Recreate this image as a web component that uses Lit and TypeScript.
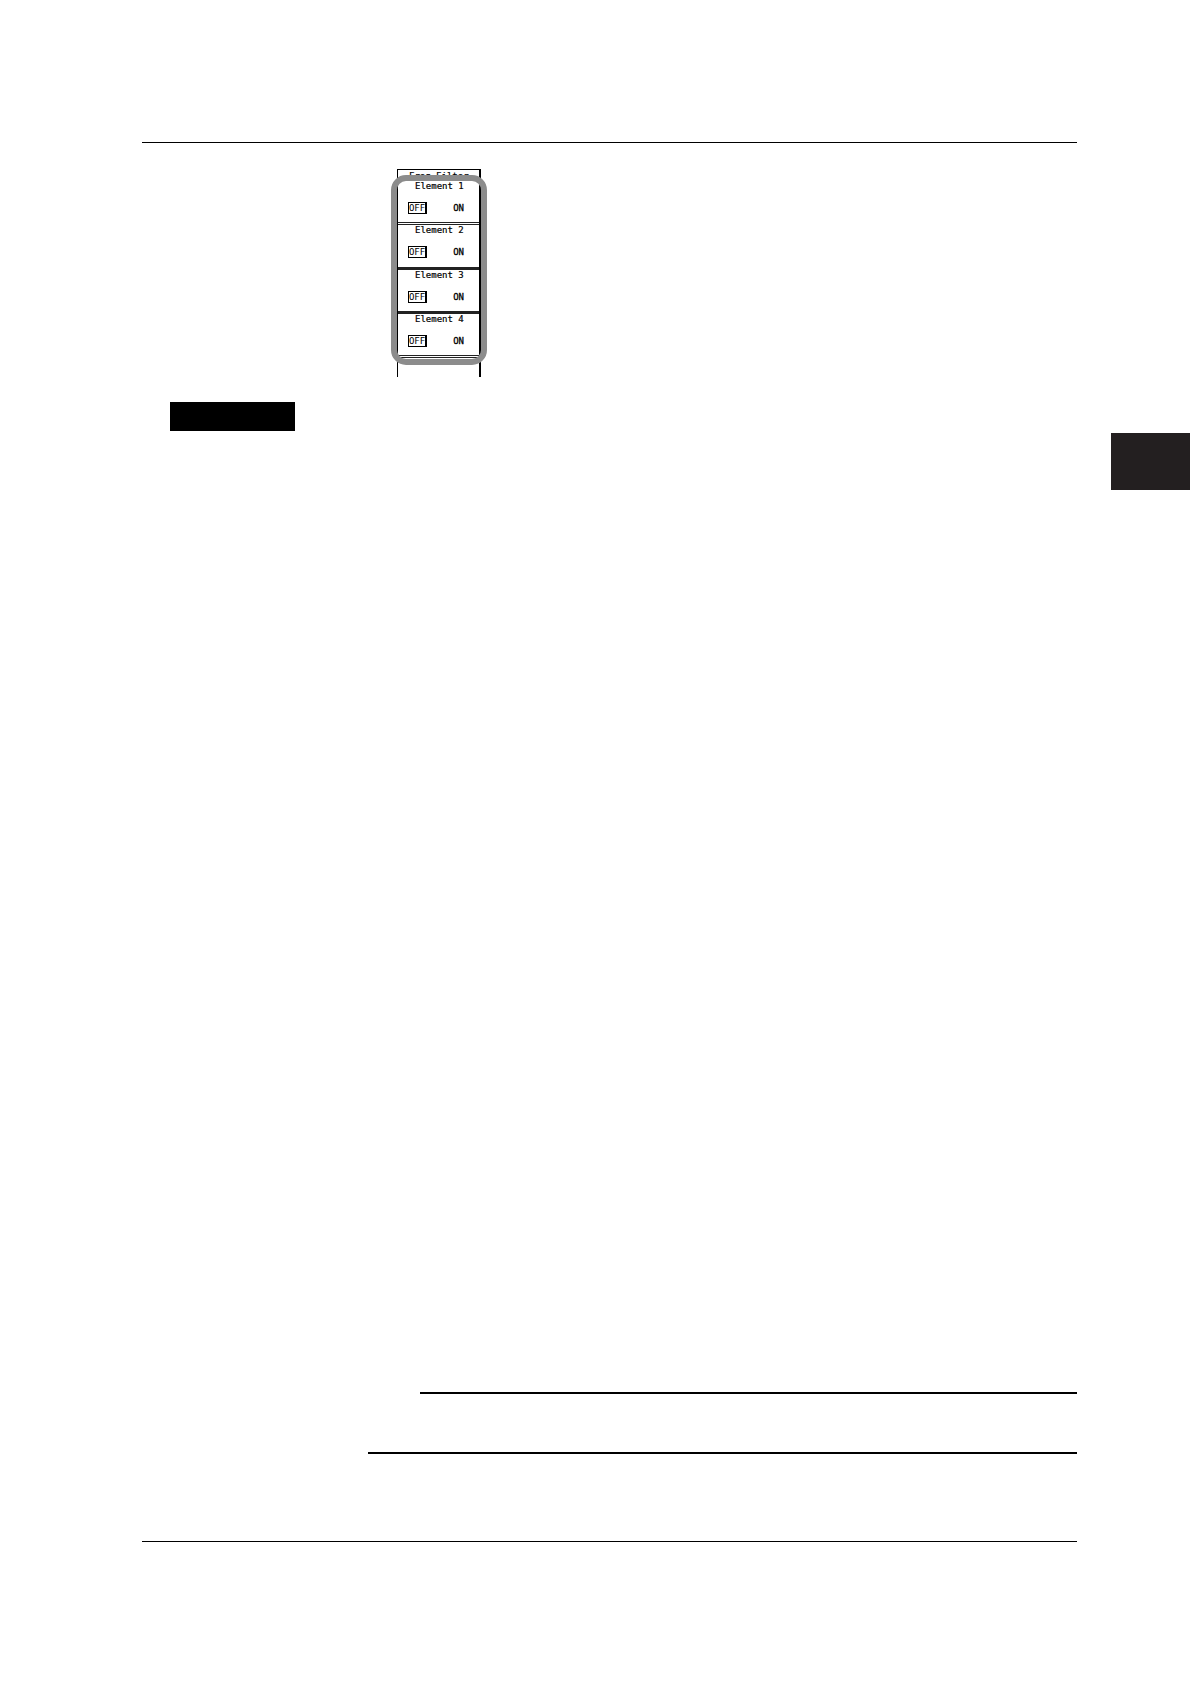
import { LitElement, html, css } from "lit";
import { customElement, property } from "lit/decorators.js";

@customElement("filter-row")
class FilterRow extends LitElement {
  @property() label = "";
  static styles = css`
    :host {
      display: block;
      box-sizing: border-box;
      font: 9px/10px "DejaVu Sans Mono", monospace;
      color: #000;
      border-bottom: 3px solid #222;
    }
    :host(:first-child), :host(:last-child) { border-bottom-style: double; }
    .set { margin: 0; padding: 0; border: 0; min-width: 0; }
    .title { padding: 0; margin: 0 0 0 17px; white-space: nowrap; -webkit-text-stroke: 0.2px #000; }
    .choices { display: flex; justify-content: space-between; padding: 11px 15px 0 10px; }
    .choice {
      box-sizing: border-box;
      height: 12px;
      font: inherit;
      color: #000;
      background: none;
      border: 0;
      margin: 0;
      padding: 0;
      -webkit-text-stroke: 0.3px #000;
    }
    .on {
      width: 19px;
      border: solid #000;
      border-width: 1px 2px 1px 1px;
      display: flex;
      align-items: center;
      justify-content: center;
      -webkit-text-stroke: 0;
    }
  `;
  render() {
    return html`<fieldset class="set">
      <legend class="title">${this.label}</legend>
      <div class="choices">
        <button class="choice on" aria-pressed="true">OFF</button>
        <button class="choice" aria-pressed="false">ON</button>
      </div>
    </fieldset>`;
  }
}

@customElement("app-root")
class AppRoot extends LitElement {
  static styles = css`
    :host { display: block; background: #fff; color: #000; }
    .page { display: flex; flex-direction: column; padding: 142px 0 142px 142px; }
    .rule { height: 1px; background: #000; margin-right: 113px; }
    .menu {
      position: relative;
      box-sizing: border-box;
      width: 84px;
      height: 208px;
      margin: 26px 0 0 255px;
      border: solid #000;
      border-width: 1px 2px 0 1px;
    }
    .heading {
      margin: 0;
      padding: 1px 0 0 11px;
      font: 9px/10px "DejaVu Sans Mono", monospace;
      white-space: nowrap;
      -webkit-text-stroke: 0.2px #000;
    }
    .rows { display: grid; grid-template-rows: repeat(4, 1fr); height: 177px; }
    .ring {
      position: absolute;
      inset: 5px -8px 12px -7px;
      border: 6px solid #8c8c8c;
      border-radius: 15px;
      pointer-events: none;
    }
    .bar { width: 125px; height: 29px; margin: 25px 0 0 28px; background: #000; }
    .tab { align-self: flex-end; width: 79px; height: 57px; margin-top: 2px; background: #231f20; }
    .note {
      height: 60px;
      margin: 902px 113px 87px 226px;
      border-bottom: 2px solid #000;
    }
    .note-top { height: 2px; margin-left: 52px; background: #000; }
  `;
  render() {
    return html`<main class="page">
      <div class="rule"></div>
      <section class="menu">
        <h1 class="heading">Freq Filter</h1>
        <div class="rows">
          ${[1, 2, 3, 4].map((n) => html`<filter-row label="Element ${n}"></filter-row>`)}
        </div>
        <div class="ring"></div>
      </section>
      <div class="bar"></div>
      <div class="tab"></div>
      <div class="note"><div class="note-top"></div></div>
      <div class="rule"></div>
    </main>`;
  }
}
